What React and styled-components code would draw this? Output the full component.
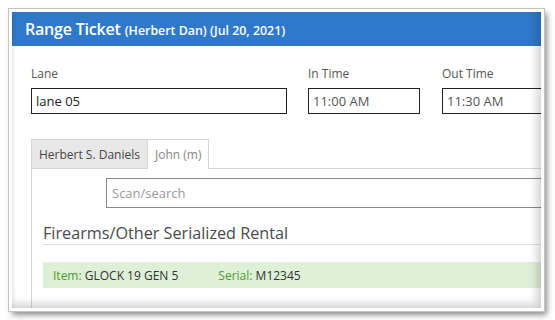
import styled, { createGlobalStyle } from 'styled-components';

const GlobalStyle = createGlobalStyle`
  html, body {
    margin: 0;
    padding: 0;
    background: #ffffff;
  }
  body {
    font-family: "Open Sans", "Liberation Sans", sans-serif;
  }
`;

const Page = styled.div`
  width: 555px;
  height: 320px;
  padding: 9px 0 0 9px;
  box-sizing: border-box;
  overflow: hidden;
`;

const Window = styled.div`
  position: relative;
  width: 535px;
  height: 302px;
  box-sizing: border-box;
  border: 3px solid #ffffff;
  outline: 1px solid #c4c4c4;
  box-shadow: 3px 4px 6px rgba(0, 0, 0, 0.45);
  background: #ffffff;
  overflow: hidden;

  &::after {
    content: '';
    position: absolute;
    inset: 0;
    pointer-events: none;
    box-shadow: inset -10px -10px 10px -6px rgba(0, 0, 0, 0.18), inset 4px 0 4px -3px rgba(0, 0, 0, 0.12);
  }
`;

const Header = styled.div`
  height: 34px;
  display: flex;
  align-items: center;
  padding-left: 13px;
  background: #2f79c8;
  color: #ffffff;
  white-space: nowrap;
`;

const Title = styled.span`
  font-size: 16px;
  font-weight: 600;
  letter-spacing: -0.2px;
`;

const SubTitle = styled.span`
  font-size: 12.4px;
  font-weight: 600;
  margin-left: 4px;
  margin-top: 2px;
`;

const Body = styled.div`
  padding: 19px 0 0 19px;
`;

const FieldRow = styled.div`
  display: flex;
  gap: 21px;
  white-space: nowrap;
`;

const Field = styled.div`
  display: flex;
  flex-direction: column;
  flex: none;
  width: ${(p) => p.$width}px;
  margin-right: ${(p) => p.$extra || 0}px;
`;

const Label = styled.label`
  font-size: 12px;
  line-height: 18px;
  color: #555555;
  margin-bottom: 5px;
`;

const TextBox = styled.div`
  height: 26px;
  box-sizing: border-box;
  border: 1px solid #222222;
  padding-left: 4px;
  display: flex;
  align-items: center;
  font-size: 13px;
  color: ${(p) => (p.$muted ? '#555555' : '#222222')};
`;

const Tabs = styled.div`
  display: flex;
  margin-top: 25px;
`;

const Tab = styled.div`
  height: 30px;
  box-sizing: border-box;
  padding: 0 7px 0 7px;
  display: flex;
  align-items: center;
  font-size: 12px;
  white-space: nowrap;
  border: 1px solid #d6d6d6;
  border-bottom: ${(p) => (p.$active ? '1px solid #d6d6d6' : 'none')};
  background: ${(p) => (p.$active ? '#e8e8e8' : '#ffffff')};
  color: ${(p) => (p.$active ? '#444444' : '#888888')};
  & + & {
    border-left: none;
  }
`;

const TabFill = styled.div`
  flex: 1;
  border-bottom: 1px solid #d6d6d6;
`;

const Panel = styled.div`
  border-left: 1px solid #d6d6d6;
  padding: 9px 0 0 11px;
  height: 200px;
`;

const Search = styled.div`
  margin-left: 63px;
  width: 520px;
  height: 30px;
  box-sizing: border-box;
  border: 1px solid #8a8a8a;
  display: flex;
  align-items: center;
  padding-left: 5px;
  font-size: 13px;
  color: #9a9a9a;
`;

const SectionTitle = styled.h3`
  margin: 15px 0 0 0;
  font-size: 16.2px;
  font-weight: 400;
  line-height: 21px;
  color: #4a4a4a;
  border-bottom: 1px solid #dddddd;
  white-space: nowrap;
`;

const ItemRow = styled.div`
  margin-top: 17px;
  height: 26px;
  display: flex;
  align-items: center;
  gap: 40px;
  padding-left: 10px;
  background: #dff0d8;
  font-size: 12px;
  color: #333333;
  white-space: nowrap;
`;

const ItemLabel = styled.span`
  color: #4e9a2e;
`;

const rentals = [{ id: 1, item: 'GLOCK 19 GEN 5', serial: 'M12345' }];

const App = () => (
  <>
    <GlobalStyle />
    <Page>
      <Window>
        <Header>
          <Title>Range Ticket</Title>
          <SubTitle>(Herbert Dan) (Jul 20, 2021)</SubTitle>
        </Header>
        <Body>
          <FieldRow>
            <Field $width={256}>
              <Label>Lane</Label>
              <TextBox>lane 05</TextBox>
            </Field>
            <Field $width={112} $extra={1}>
              <Label>In Time</Label>
              <TextBox $muted>11:00 AM</TextBox>
            </Field>
            <Field $width={112}>
              <Label>Out Time</Label>
              <TextBox $muted>11:30 AM</TextBox>
            </Field>
          </FieldRow>
          <Tabs>
            <Tab $active>Herbert S. Daniels</Tab>
            <Tab>John (m)</Tab>
            <TabFill />
          </Tabs>
          <Panel>
            <Search>Scan/search</Search>
            <SectionTitle>Firearms/Other Serialized Rental</SectionTitle>
            {rentals.map(({ id, item, serial }) => (
              <ItemRow key={id}>
                <span>
                  <ItemLabel>Item:</ItemLabel> {item}
                </span>
                <span>
                  <ItemLabel>Serial:</ItemLabel> {serial}
                </span>
              </ItemRow>
            ))}
          </Panel>
        </Body>
      </Window>
    </Page>
  </>
);

export default App;
